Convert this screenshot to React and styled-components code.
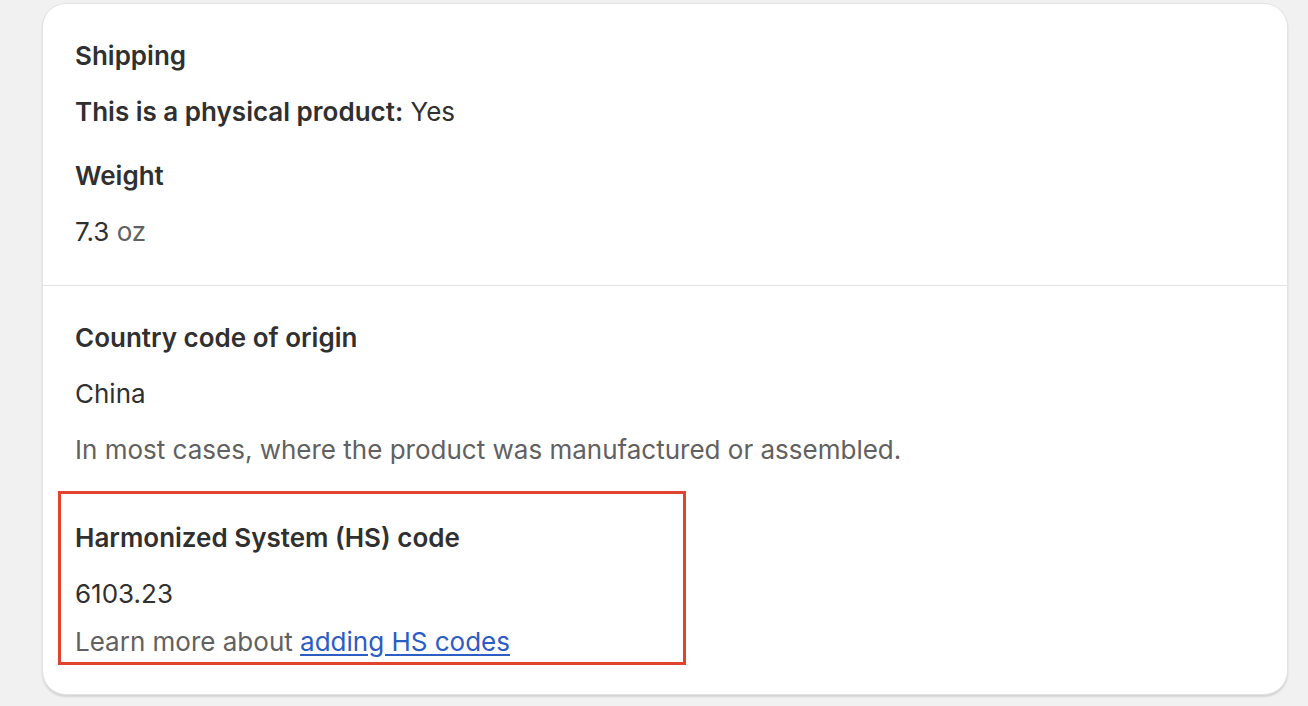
import React from "react";
import styled, { createGlobalStyle } from "styled-components";

const GlobalStyle = createGlobalStyle`
	html, body {
		margin: 0;
		padding: 0;
		background: #f1f1f1;
	}
	body {
		font-family: Inter, "Noto Sans", sans-serif;
		color: #303030;
	}
`;

const Page = styled.div`
	padding: 3px 20px 13px 42px;
	width: 1308px;
	height: 706px;
	box-sizing: border-box;
`;

const Card = styled.div`
	background: #ffffff;
	border: 1px solid #e3e3e3;
	border-radius: 24px;
	box-shadow: 0 2px 2px rgba(0, 0, 0, 0.12);
	overflow: hidden;
`;

const Section = styled.div`
	display: flex;
	flex-direction: column;
	padding: ${(p) => p.$pad || "32px 32px 32px"};
	border-top: ${(p) => (p.$divider ? "1px solid #e3e3e3" : "none")};
`;

const Line = styled.div`
	font-size: 26px;
	line-height: 40px;
	font-weight: ${(p) => (p.$bold ? 600 : 400)};
	color: ${(p) => (p.$muted ? "#616161" : "#303030")};
	margin-top: ${(p) => p.$gap || 0}px;
	white-space: nowrap;
`;

const Strong = styled.span`
	font-weight: 600;
`;

const Unit = styled.span`
	color: #616161;
`;

const Highlight = styled.div`
	display: flex;
	flex-direction: column;
	width: 628px;
	box-sizing: border-box;
	margin: 21px 0 0 -17px;
	padding: 24px 14px 0;
	border: 3px solid #e0442f;
`;

const Link = styled.a`
	color: #2c5cc5;
	text-decoration: underline;
	text-underline-offset: 3px;
	cursor: pointer;
`;

export default function App() {
	return (
		<>
			<GlobalStyle />
			<Page>
				<Card>
					<Section $pad="32px 32px 33px">
						<Line $bold>Shipping</Line>
						<Line $gap={16}>
							<Strong>This is a physical product:</Strong> Yes
						</Line>
						<Line $bold $gap={24}>
							Weight
						</Line>
						<Line $gap={16}>
							7.3 <Unit>oz</Unit>
						</Line>
					</Section>
					<Section $divider $pad="32px 32px 29px">
						<Line $bold>Country code of origin</Line>
						<Line $gap={16}>China</Line>
						<Line $muted $gap={16}>
							In most cases, where the product was manufactured or assembled.
						</Line>
						<Highlight>
							<Line $bold>Harmonized System (HS) code</Line>
							<Line $gap={16}>6103.23</Line>
							<Line $muted $gap={8}>
								Learn more about <Link>adding HS codes</Link>
							</Line>
						</Highlight>
					</Section>
				</Card>
			</Page>
		</>
	);
}
